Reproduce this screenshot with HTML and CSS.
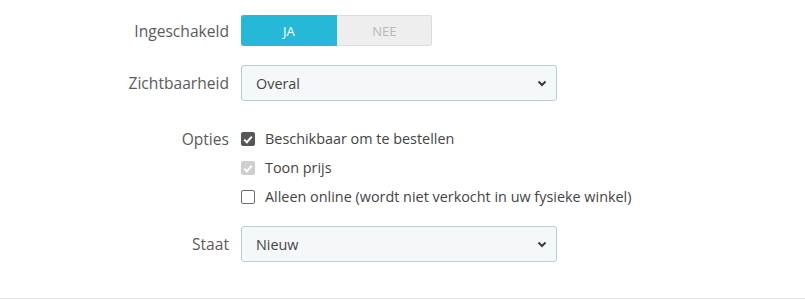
FILE: index.html
```html
<!DOCTYPE html>
<html lang="nl">
<head>
    <meta charset="UTF-8">
    <title>Product opties</title>
    <link rel="stylesheet" href="styles.css">
</head>
<body>
    <div class="panel">
        <div class="form-row row-switch">
            <label class="form-label">Ingeschakeld</label>
            <div class="switch">
                <span class="switch-opt on">JA</span>
                <span class="switch-opt off">NEE</span>
            </div>
        </div>

        <div class="form-row row-select">
            <label class="form-label">Zichtbaarheid</label>
            <div class="select">
                <span>Overal</span>
                <svg class="chevron" width="10" height="7" viewBox="0 0 10 7"><path d="M1.5 1.5 L5 5 L8.5 1.5" fill="none" stroke="#363a41" stroke-width="2"/></svg>
            </div>
        </div>

        <div class="form-row row-options">
            <label class="form-label">Opties</label>
            <div class="options">
                <div class="option">
                    <span class="box checked"><svg width="10" height="9" viewBox="0 0 10 9"><path d="M1.2 4.6 L3.9 7.2 L8.8 1.6" fill="none" stroke="#fff" stroke-width="2"/></svg></span>
                    Beschikbaar om te bestellen
                </div>
                <div class="option">
                    <span class="box disabled"><svg width="10" height="9" viewBox="0 0 10 9"><path d="M1.2 4.6 L3.9 7.2 L8.8 1.6" fill="none" stroke="#fff" stroke-width="2"/></svg></span>
                    Toon prijs
                </div>
                <div class="option">
                    <span class="box"></span>
                    Alleen online (wordt niet verkocht in uw fysieke winkel)
                </div>
            </div>
        </div>

        <div class="form-row row-select last">
            <label class="form-label">Staat</label>
            <div class="select">
                <span>Nieuw</span>
                <svg class="chevron" width="10" height="7" viewBox="0 0 10 7"><path d="M1.5 1.5 L5 5 L8.5 1.5" fill="none" stroke="#363a41" stroke-width="2"/></svg>
            </div>
        </div>
    </div>
</body>
</html>
```

FILE: styles.css
```css
body {
    margin: 0;
    font-family: "Open Sans", Arial, sans-serif;
    font-size: 14.4px;
    color: #444;
    background: #fff;
}

.panel {
    padding-top: 15px;
    height: 283px;
    border-bottom: 1px solid #e3e3e3;
}

.form-row {
    display: grid;
    grid-template-columns: 229px 316px;
    column-gap: 12px;
    align-items: center;
}

.form-label {
    text-align: right;
    color: #5a5a5a;
    font-size: 15.6px;
}

.row-switch {
    margin-bottom: 19px;
}

.switch {
    display: flex;
    width: 191px;
    height: 31px;
    border-radius: 3px;
    overflow: hidden;
    background: #eee;
    box-shadow: inset 0 0 0 1px #dcdcdc;
}

.switch-opt {
    flex: 1;
    display: flex;
    align-items: center;
    justify-content: center;
    font-size: 13px;
}

.switch-opt.on {
    background: #25b9d7;
    color: #fff;
}

.switch-opt.off {
    color: #b7b7b7;
}

.select {
    box-sizing: border-box;
    height: 36px;
    display: flex;
    align-items: center;
    justify-content: space-between;
    padding: 0 9px 0 14px;
    background: #f5f8f9;
    border: 1px solid #bbcdd2;
    border-radius: 3px;
    color: #444;
}

.row-select {
    margin-bottom: 28px;
}

.row-select.last {
    margin-bottom: 0;
}

.row-options {
    align-items: start;
    margin-bottom: 19px;
}

.row-options .form-label {
    line-height: 20px;
}

.options {
    display: flex;
    flex-direction: column;
    gap: 9px;
}

.option {
    display: flex;
    align-items: center;
    gap: 10px;
    line-height: 20px;
    white-space: nowrap;
}

.box {
    flex-shrink: 0;
    box-sizing: border-box;
    width: 14px;
    height: 14px;
    border-radius: 2px;
    border: 1px solid #6c6c6c;
    background: #fff;
    display: flex;
    align-items: center;
    justify-content: center;
}

.box.checked {
    background: #575757;
    border-color: #575757;
}

.box.disabled {
    background: #cfcfcf;
    border-color: #cfcfcf;
}
```
